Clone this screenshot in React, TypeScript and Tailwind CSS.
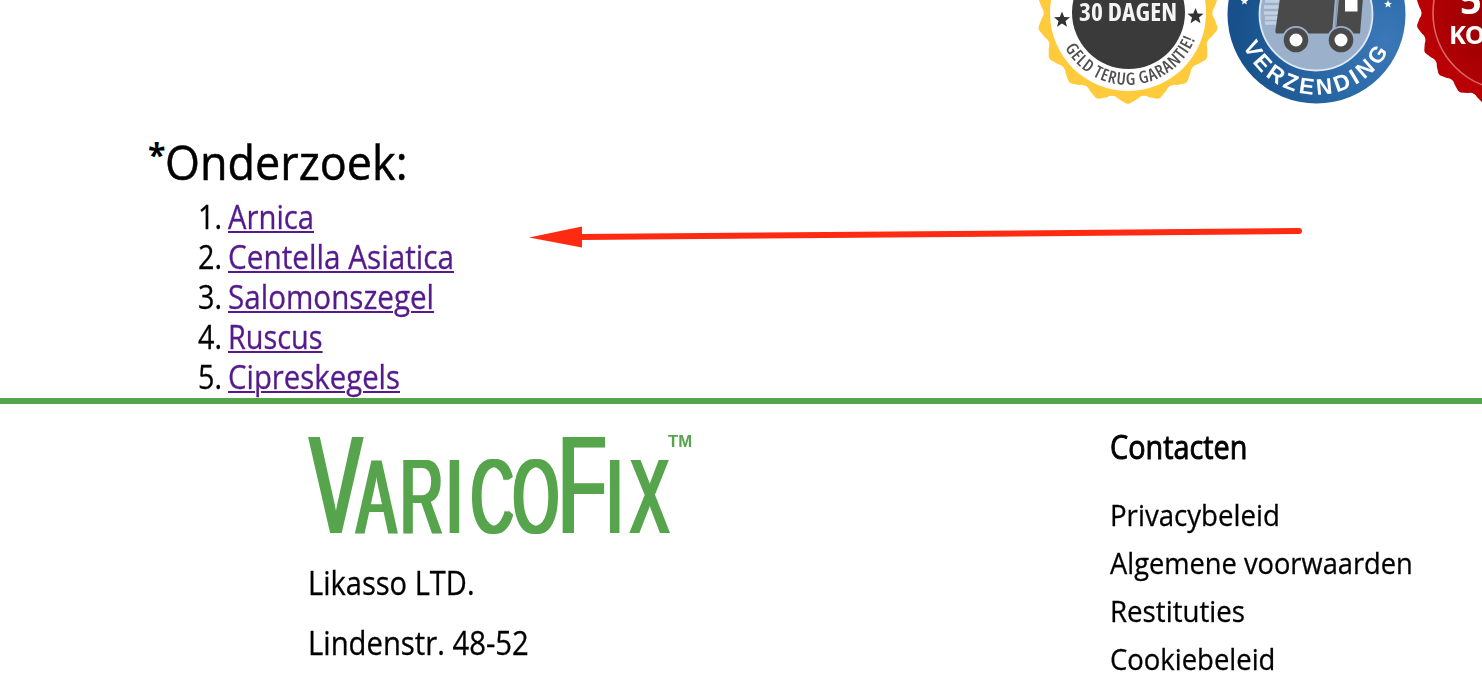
const research = [
  { name: "Arnica", fit: "scale-x-[0.914]" },
  { name: "Centella Asiatica", fit: "scale-x-[0.929]" },
  { name: "Salomonszegel", fit: "scale-x-[0.925]" },
  { name: "Ruscus", fit: "scale-x-[0.902]" },
  { name: "Cipreskegels", fit: "scale-x-[0.917]" },
];

const links = [
  { name: "Privacybeleid", fit: "scale-x-[0.921]" },
  { name: "Algemene voorwaarden", fit: "scale-x-[0.909]" },
  { name: "Restituties", fit: "scale-x-[0.922]" },
  { name: "Cookiebeleid", fit: "scale-x-[0.915]" },
];

function polar(cx: number, cy: number, r: number, deg: number) {
  const a = (deg * Math.PI) / 180;
  return `${(cx + r * Math.sin(a)).toFixed(2)} ${(cy + r * Math.cos(a)).toFixed(2)}`;
}

function scallop(cx: number, cy: number, outer: number, inner: number, teeth: number) {
  const step = 360 / teeth;
  const mid = (outer + inner) / 2;
  let d = `M${polar(cx, cy, outer, -step * 0.06)}`;
  for (let i = 0; i < teeth; i++) {
    const a = i * step;
    d += `Q${polar(cx, cy, outer + 0.6, a)} ${polar(cx, cy, outer, a + step * 0.06)}`;
    d += `L${polar(cx, cy, mid, a + step * 0.3)}Q${polar(cx, cy, inner - 1, a + step * 0.5)} ${polar(cx, cy, mid, a + step * 0.7)}`;
    d += `L${polar(cx, cy, outer, a + step * 0.94)}`;
  }
  return d + "Z";
}

const STAR = "M0-8 2.2-2.6 8-2.2 3.5 1.5 5 7.2 0 4-5 7.2-3.5 1.5-8-2.2-2.2-2.6Z";

function Badges() {
  return (
    <svg
      className="block h-[110px] w-[462px] shrink-0 blur-[0.5px]"
      viewBox="1020 0 462 110"
      fontFamily="'Open Sans', sans-serif"
    >
      <defs>
        <radialGradient id="blue" gradientUnits="userSpaceOnUse" cx="1385" cy="40" r="150">
          <stop offset="0" stopColor="#3a78b8" />
          <stop offset="0.5" stopColor="#2866a4" />
          <stop offset="1" stopColor="#17508a" />
        </radialGradient>
        <radialGradient id="red" gradientUnits="userSpaceOnUse" cx="1510" cy="13" r="78">
          <stop offset="0" stopColor="#8e0000" />
          <stop offset="1" stopColor="#b00004" />
        </radialGradient>
        <path id="goldArc" d="M1056 13A72 72 0 0 0 1200 13" />
        <path id="blueArc" d="M1236.5 14A80.5 80.5 0 0 0 1397.5 14" />
      </defs>

      <path d={scallop(1128, 13, 90.5, 83, 18)} fill="#ffcb3d" />
      <circle cx="1128" cy="13" r="78" fill="#fff" />
      <circle cx="1128.5" cy="12.5" r="56.5" fill="#3a3a3a" />
      <path d={STAR} transform="translate(1062 19.5)" fill="#333" />
      <path d={STAR} transform="translate(1195.5 16)" fill="#333" />
      <text
        x="1079"
        y="20.5"
        fontSize="25.5"
        fontWeight="700"
        fill="#f4f4f4"
        textLength="98"
        className="[font-stretch:75%]"
      >
        30 DAGEN
      </text>
      <text fontSize="17" fontWeight="600" fill="#505050" className="[font-stretch:75%]">
        <textPath href="#goldArc" startOffset="36" textLength="163">
          GELD TERUG GARANTIE!
        </textPath>
      </text>

      <circle cx="1316.5" cy="14.5" r="89" fill="url(#blue)" />
      <circle cx="1316" cy="14" r="56.5" fill="#9bb0ca" stroke="#dfe8f2" strokeWidth="1.8" />
      <path
        d="M1265 1h16M1264 7h16M1264 13h15M1265 18h14M1265 23h14"
        stroke="#c3d0df"
        strokeWidth="3.6"
      />
      <path d="M1280-2H1335L1332 33.5H1276.5Q1275 33 1275.5 30Z" fill="#4a4a4a" />
      <path d="M1339-2H1363L1360 33.5H1332L1336.5 25Z" fill="#4a4a4a" />
      <path d="M1337.5-2L1335.5 26" stroke="#8496ac" strokeWidth="1.4" />
      <rect x="1345" y="-2" width="12.5" height="13.5" fill="#fff" />
      <circle cx="1296" cy="40" r="13.2" fill="#4a4a4a" stroke="#9bb0ca" strokeWidth="1.8" />
      <circle cx="1341" cy="40" r="13.2" fill="#4a4a4a" stroke="#9bb0ca" strokeWidth="1.8" />
      <circle cx="1296" cy="40" r="6.5" fill="#fff" />
      <circle cx="1341" cy="40" r="6.5" fill="#fff" />
      <path d={STAR} transform="translate(1244.5 1) scale(.5)" fill="#fff" />
      <path d={STAR} transform="translate(1388 4) scale(.5)" fill="#fff" />
      <text fontSize="22.5" fontWeight="700" fill="#fff" fontFamily="'Liberation Sans', sans-serif">
        <textPath href="#blueArc" startOffset="32.5" textLength="181">
          VERZENDING
        </textPath>
      </text>

      <path d={scallop(1510, 13, 93.5, 87.5, 22)} fill="#b80005" />
      <circle cx="1510" cy="13" r="77" fill="url(#red)" stroke="#d76a6a" strokeWidth="1.6" />
      <text x="1460" y="13.5" fontSize="38" fontWeight="700" fill="#fff">
        5
      </text>
      <text x="1449" y="43.5" fontSize="25.5" fontWeight="700" fill="#fff" textLength="36">
        KO
      </text>
    </svg>
  );
}

function Logo() {
  return (
    <svg
      className="block h-[100px] w-[384px] blur-[0.5px]"
      viewBox="0 0 384 100"
      fill="#56a44c"
      fontFamily="'Liberation Sans', sans-serif"
      aria-label="VaricoFix"
    >
      <filter id="stems" filterUnits="userSpaceOnUse" x="0" y="0" width="384" height="100">
        <feMorphology operator="dilate" radius="2 0" />
      </filter>
      <g filter="url(#stems)">
        <text transform="scale(.56 1)" y="99" fontSize="140">
          <tspan x="3">V</tspan>
          <tspan fontSize="105" x="87 165 247 291 366">
            ARICO
          </tspan>
          <tspan x="447">F</tspan>
          <tspan fontSize="105" x="533 575">
            IX
          </tspan>
        </text>
      </g>
      <text x="360" y="12.5" fontSize="17" fontWeight="700" textLength="24" lengthAdjust="spacingAndGlyphs">
        TM
      </text>
    </svg>
  );
}

export default function App() {
  return (
    <div className="relative flex h-[674px] w-[1482px] flex-col overflow-hidden bg-white font-['Open_Sans',sans-serif] whitespace-nowrap text-black">
      <header className="flex h-[138px] shrink-0 justify-end">
        <Badges />
      </header>

      <main className="h-[260px] shrink-0 pl-[148px]">
        <h2 className="mb-[11px] flex h-12 text-[48px] leading-[48px] font-normal">
          <span className="w-[17px] text-[32px] leading-[34px] font-bold">*</span>
          <span className="origin-left scale-x-[0.937] [-webkit-text-stroke:0.5px_black]">Onderzoek:</span>
        </h2>
        <ol className="text-[32px] leading-10 [-webkit-text-stroke:0.3px]">
          {research.map((item, i) => (
            <li key={item.name} className="flex h-10">
              <span className="w-[74px] origin-right scale-x-[0.9] text-right">{i + 1}.</span>
              <a
                href="#"
                className={`ml-[6px] origin-left text-[#551a8b] underline decoration-2 underline-offset-2 ${item.fit}`}
              >
                {item.name}
              </a>
            </li>
          ))}
        </ol>
      </main>

      <footer className="flex grow border-t-[6px] border-[#56a44c] pl-[308px] [-webkit-text-stroke:0.3px]">
        <div className="w-[802px] pt-[30px]">
          <Logo />
          <div className="mt-[29px] flex flex-col gap-5 text-[32px] leading-10">
            <p className="origin-left scale-x-[0.908]">Likasso LTD.</p>
            <p className="origin-left scale-x-[0.914]">Lindenstr. 48-52</p>
          </div>
        </div>
        <nav className="pt-[23px]">
          <h3 className="mb-6 origin-left scale-x-[0.9] text-[32px] leading-10 font-medium [-webkit-text-stroke:0.9px]">
            Contacten
          </h3>
          <ul className="text-[30px] leading-[48px]">
            {links.map((link) => (
              <li key={link.name} className={`origin-left ${link.fit}`}>
                {link.name}
              </li>
            ))}
          </ul>
        </nav>
      </footer>

      <svg className="absolute top-[220px] left-[525px] h-9 w-[785px]" viewBox="525 220 785 36">
        <path d="M580 237.1L1299 231" stroke="#ff2a12" strokeWidth="6" strokeLinecap="round" />
        <path d="M529 237.5L582 226.5V247.5Z" fill="#ff2a12" />
      </svg>
    </div>
  );
}
